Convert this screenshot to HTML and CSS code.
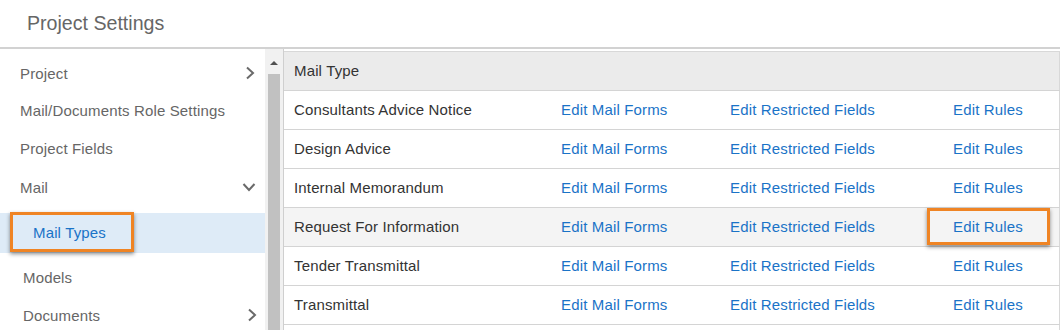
FILE: index.html
```html
<!DOCTYPE html>
<html>
<head>
<meta charset="utf-8">
<link rel="stylesheet" href="styles.css">
</head>
<body>
<div class="page">
  <header class="top">
    <h1 class="title">Project Settings</h1>
  </header>
  <div class="main">
    <nav class="sidebar">
      <div class="item item-project"><span>Project</span><svg class="chev" viewBox="0 0 10 14"><path d="M2 1.5 L8 7 L2 12.5" /></svg></div>
      <div class="item item-role"><span>Mail/Documents Role Settings</span></div>
      <div class="item item-fields"><span>Project Fields</span></div>
      <div class="item item-mail"><span>Mail</span><svg class="chev down" viewBox="0 0 14 10"><path d="M1.5 2 L7 8 L12.5 2" /></svg></div>
      <div class="item item-types selected"><span>Mail Types</span><div class="callout callout-nav"></div></div>
      <div class="item item-models"><span>Models</span></div>
      <div class="item item-docs"><span>Documents</span><svg class="chev" viewBox="0 0 10 14"><path d="M2 1.5 L8 7 L2 12.5" /></svg></div>
    </nav>
    <div class="scrollbar">
      <div class="scroll-up"></div>
      <div class="thumb"></div>
    </div>
    <section class="content">
      <table class="grid">
        <colgroup>
          <col class="c1"><col class="c2"><col class="c3"><col class="c4">
        </colgroup>
        <thead>
          <tr><th>Mail Type</th><th></th><th></th><th></th></tr>
        </thead>
        <tbody>
          <tr><td>Consultants Advice Notice</td><td><a>Edit Mail Forms</a></td><td><a>Edit Restricted Fields</a></td><td><a>Edit Rules</a></td></tr>
          <tr><td>Design Advice</td><td><a>Edit Mail Forms</a></td><td><a>Edit Restricted Fields</a></td><td><a>Edit Rules</a></td></tr>
          <tr><td>Internal Memorandum</td><td><a>Edit Mail Forms</a></td><td><a>Edit Restricted Fields</a></td><td><a>Edit Rules</a></td></tr>
          <tr class="hover"><td>Request For Information</td><td><a>Edit Mail Forms</a></td><td><a>Edit Restricted Fields</a></td><td class="rules-cell"><a>Edit Rules</a><div class="callout callout-rules"></div></td></tr>
          <tr><td>Tender Transmittal</td><td><a>Edit Mail Forms</a></td><td><a>Edit Restricted Fields</a></td><td><a>Edit Rules</a></td></tr>
          <tr><td>Transmittal</td><td><a>Edit Mail Forms</a></td><td><a>Edit Restricted Fields</a></td><td><a>Edit Rules</a></td></tr>
          <tr><td>&nbsp;</td><td></td><td></td><td></td></tr>
        </tbody>
      </table>
    </section>
  </div>
</div>
</body>
</html>
```

FILE: styles.css
```css
* { box-sizing: border-box; }
html, body { margin: 0; padding: 0; }
body {
  font-family: "Liberation Sans", Arial, sans-serif;
  font-size: 15px;
  letter-spacing: 0.15px;
  background: #fff;
  color: #333;
  width: 1060px;
  height: 330px;
  overflow: hidden;
}
.page { display: flex; flex-direction: column; height: 330px; overflow: hidden; }
.top {
  height: 49px;
  flex-shrink: 0;
  border-bottom: 2px solid #d2d2d2;
  padding-left: 27px;
  display: flex;
  align-items: flex-start;
}
.title {
  margin: 12px 0 0 0;
  font-weight: normal;
  font-size: 19.6px;
  letter-spacing: 0;
  color: #666;
  line-height: 23px;
}
.main { display: flex; flex: 1; min-height: 0; overflow: hidden; }
.sidebar {
  width: 265px;
  padding-top: 6px;
  display: flex;
  flex-direction: column;
  color: #666;
  flex-shrink: 0;
  overflow: hidden;
}
.item {
  display: flex;
  align-items: center;
  justify-content: space-between;
  padding-left: 20px;
  padding-right: 10px;
  height: 38px;
  flex-shrink: 0;
  position: relative;
}
.item-project { height: 36px; }
.item-role { height: 38px; }
.item-fields { height: 39px; }
.item-mail { height: 45px; padding-bottom: 7px; padding-right: 9px; }
.item-types { height: 40px; padding-left: 33px; padding-bottom: 1px; background: #deebf7; color: #1a73c7; }
.item-models { height: 43px; padding-top: 6px; padding-left: 23px; }
.item-docs { height: 38px; padding-left: 23px; padding-right: 8px; }
.chev { width: 10px; height: 14px; fill: none; stroke: #6a6a6a; stroke-width: 2; }
.chev.down { width: 14px; height: 10px; }
.callout {
  position: absolute;
  border: 3px solid #ef8424;
  box-shadow: 0 2px 4px rgba(0, 0, 0, 0.45);
  pointer-events: none;
}
.callout-nav { left: 10px; top: -1px; width: 124px; height: 40px; }
.scrollbar {
  width: 18px;
  flex-shrink: 0;
  background: #f1f1f1;
  display: flex;
  flex-direction: column;
  align-items: center;
  padding-top: 12px;
}
.scroll-up {
  width: 0; height: 0;
  border-left: 4px solid transparent;
  border-right: 4px solid transparent;
  border-bottom: 4px solid #505050;
  margin-bottom: 9px;
}
.thumb { width: 12px; flex: 1; background: #c1c1c1; }
.content {
  flex: 1;
  border-left: 1px solid #cfcfcf;
  padding-top: 2px;
  padding-right: 2px;
  overflow: hidden;
}
.grid {
  width: 775px;
  border-collapse: collapse;
  table-layout: fixed;
  border-top: 1px solid #d8d8d8;
  border-right: 1px solid #d8d8d8;
}
.c1 { width: 267px; }
.c2 { width: 169px; }
.c3 { width: 223px; }
.c4 { width: 116px; }
.grid th, .grid td {
  height: 39px;
  padding: 0 0 2px 10px;
  text-align: left;
  font-weight: normal;
  border-bottom: 1px solid #d4d4d4;
  white-space: nowrap;
  color: #333;
}
.grid th { background: #ebebeb; }
.grid a { color: #1a73c7; text-decoration: none; }
.grid tr.hover td { background: #f4f4f4; }
.rules-cell { position: relative; }
.callout-rules { left: -16px; top: 0; width: 123px; height: 37px; }
```
